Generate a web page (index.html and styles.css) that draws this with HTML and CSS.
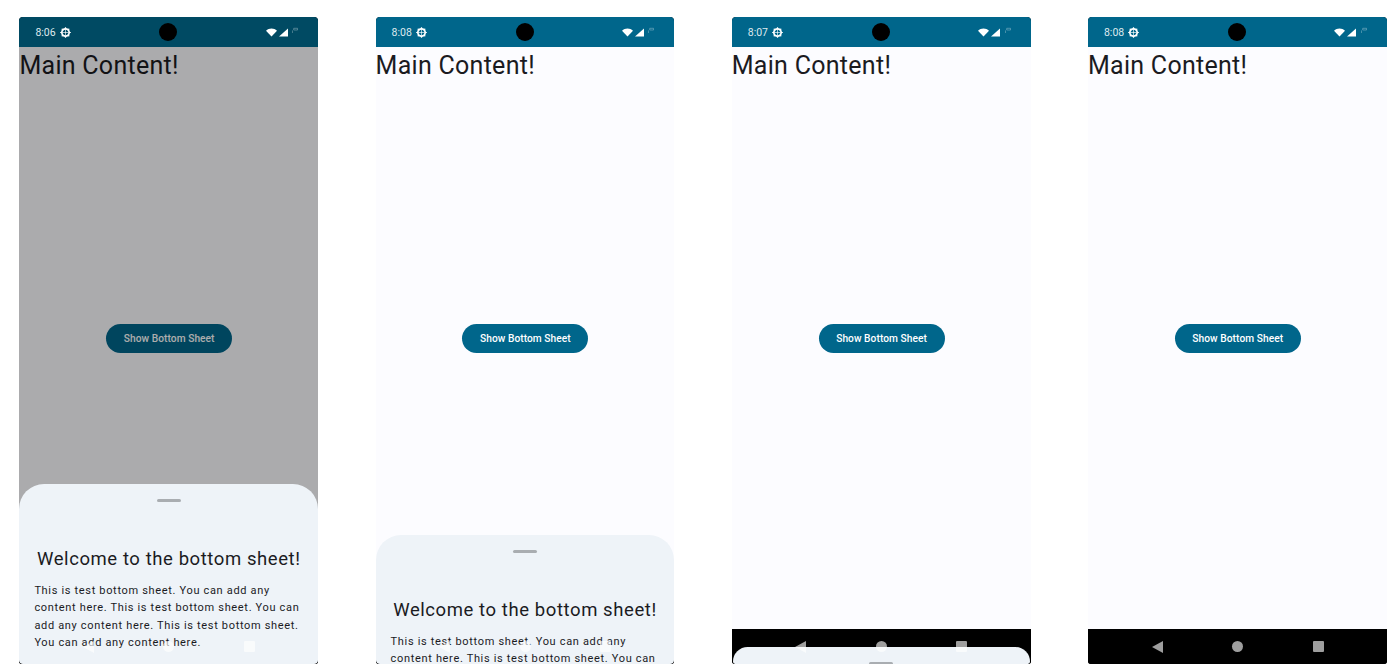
FILE: index.html
```html
<!DOCTYPE html>
<html lang="en">
<head>
  <meta charset="UTF-8">
  <meta name="viewport" content="width=device-width, initial-scale=1.0">
  <title>Bottom Sheet</title>
  <link rel="stylesheet" href="styles.css">
</head>
<body>
  <div class="gallery">

    <!-- sheet fully open, content dimmed -->
    <div class="phone">
      <div class="status-bar status-bar-dim">
        <div class="status-left">
          <span class="time">8:06</span>
          <svg class="gear" viewBox="0 0 12 12"><circle cx="6" cy="6" r="4" fill="none" stroke="currentColor" stroke-width="1.9"/><path d="M6 0.2V11.8M0.2 6H11.8M1.9 1.9L10.1 10.1M10.1 1.9L1.9 10.1" stroke="currentColor" stroke-width="1.3" stroke-dasharray="2.4 7"/><path d="M6 3V9M3 6H9" stroke="currentColor" stroke-width="0.7"/></svg>
        </div>
        <div class="camera"></div>
        <div class="status-right">
          <svg class="wifi" viewBox="0 0 11 8"><path d="M0 2.2C3 -0.6 8 -0.6 11 2.2L5.5 8Z" fill="currentColor"/></svg>
          <svg class="signal" viewBox="0 0 10 9"><path d="M10 0V9H0Z" fill="currentColor"/></svg>
          <svg class="battery" viewBox="0 0 7 7"><path d="M0.5 7V4M2 1.5H6.5V3.5H2Z" fill="none" stroke="currentColor" stroke-width="0.7"/></svg>
        </div>
      </div>
      <div class="content">
        <h1>Main Content!</h1>
        <div class="button-area"><button>Show Bottom Sheet</button></div>
      </div>
      <div class="nav-bar"></div>
      <div class="scrim"></div>
      <div class="sheet sheet-open">
        <div class="handle"></div>
        <h2>Welcome to the bottom sheet!</h2>
        <p>This is test bottom sheet. You can add any content here. This is test bottom sheet. You can add any content here. This is test bottom sheet. You can add any content here.</p>
      </div>
      <div class="nav-icons">
        <svg class="nav-back" viewBox="0 0 11 12"><path d="M11 0V12L0 6Z" fill="currentColor"/></svg>
        <span class="nav-home"></span>
        <span class="nav-recent"></span>
      </div>
    </div>

    <!-- sheet half way -->
    <div class="phone">
      <div class="status-bar">
        <div class="status-left">
          <span class="time">8:08</span>
          <svg class="gear" viewBox="0 0 12 12"><circle cx="6" cy="6" r="4" fill="none" stroke="currentColor" stroke-width="1.9"/><path d="M6 0.2V11.8M0.2 6H11.8M1.9 1.9L10.1 10.1M10.1 1.9L1.9 10.1" stroke="currentColor" stroke-width="1.3" stroke-dasharray="2.4 7"/><path d="M6 3V9M3 6H9" stroke="currentColor" stroke-width="0.7"/></svg>
        </div>
        <div class="camera"></div>
        <div class="status-right">
          <svg class="wifi" viewBox="0 0 11 8"><path d="M0 2.2C3 -0.6 8 -0.6 11 2.2L5.5 8Z" fill="currentColor"/></svg>
          <svg class="signal" viewBox="0 0 10 9"><path d="M10 0V9H0Z" fill="currentColor"/></svg>
          <svg class="battery" viewBox="0 0 7 7"><path d="M0.5 7V4M2 1.5H6.5V3.5H2Z" fill="none" stroke="currentColor" stroke-width="0.7"/></svg>
        </div>
      </div>
      <div class="content">
        <h1>Main Content!</h1>
        <div class="button-area"><button>Show Bottom Sheet</button></div>
      </div>
      <div class="nav-bar"></div>
      <div class="sheet sheet-half">
        <div class="handle"></div>
        <h2>Welcome to the bottom sheet!</h2>
        <p>This is test bottom sheet. You can add any content here. This is test bottom sheet. You can add any content here. This is test bottom sheet. You can add any content here.</p>
      </div>
      <div class="nav-icons">
        <svg class="nav-back" viewBox="0 0 11 12"><path d="M11 0V12L0 6Z" fill="currentColor"/></svg>
        <span class="nav-home"></span>
        <span class="nav-recent"></span>
      </div>
    </div>

    <!-- sheet peeking -->
    <div class="phone">
      <div class="status-bar">
        <div class="status-left">
          <span class="time">8:07</span>
          <svg class="gear" viewBox="0 0 12 12"><circle cx="6" cy="6" r="4" fill="none" stroke="currentColor" stroke-width="1.9"/><path d="M6 0.2V11.8M0.2 6H11.8M1.9 1.9L10.1 10.1M10.1 1.9L1.9 10.1" stroke="currentColor" stroke-width="1.3" stroke-dasharray="2.4 7"/><path d="M6 3V9M3 6H9" stroke="currentColor" stroke-width="0.7"/></svg>
        </div>
        <div class="camera"></div>
        <div class="status-right">
          <svg class="wifi" viewBox="0 0 11 8"><path d="M0 2.2C3 -0.6 8 -0.6 11 2.2L5.5 8Z" fill="currentColor"/></svg>
          <svg class="signal" viewBox="0 0 10 9"><path d="M10 0V9H0Z" fill="currentColor"/></svg>
          <svg class="battery" viewBox="0 0 7 7"><path d="M0.5 7V4M2 1.5H6.5V3.5H2Z" fill="none" stroke="currentColor" stroke-width="0.7"/></svg>
        </div>
      </div>
      <div class="content">
        <h1>Main Content!</h1>
        <div class="button-area"><button>Show Bottom Sheet</button></div>
      </div>
      <div class="nav-bar"></div>
      <div class="sheet sheet-peek">
        <div class="handle"></div>
      </div>
      <div class="nav-icons">
        <svg class="nav-back" viewBox="0 0 11 12"><path d="M11 0V12L0 6Z" fill="currentColor"/></svg>
        <span class="nav-home"></span>
        <span class="nav-recent"></span>
      </div>
    </div>

    <!-- sheet hidden -->
    <div class="phone">
      <div class="status-bar">
        <div class="status-left">
          <span class="time">8:08</span>
          <svg class="gear" viewBox="0 0 12 12"><circle cx="6" cy="6" r="4" fill="none" stroke="currentColor" stroke-width="1.9"/><path d="M6 0.2V11.8M0.2 6H11.8M1.9 1.9L10.1 10.1M10.1 1.9L1.9 10.1" stroke="currentColor" stroke-width="1.3" stroke-dasharray="2.4 7"/><path d="M6 3V9M3 6H9" stroke="currentColor" stroke-width="0.7"/></svg>
        </div>
        <div class="camera"></div>
        <div class="status-right">
          <svg class="wifi" viewBox="0 0 11 8"><path d="M0 2.2C3 -0.6 8 -0.6 11 2.2L5.5 8Z" fill="currentColor"/></svg>
          <svg class="signal" viewBox="0 0 10 9"><path d="M10 0V9H0Z" fill="currentColor"/></svg>
          <svg class="battery" viewBox="0 0 7 7"><path d="M0.5 7V4M2 1.5H6.5V3.5H2Z" fill="none" stroke="currentColor" stroke-width="0.7"/></svg>
        </div>
      </div>
      <div class="content">
        <h1>Main Content!</h1>
        <div class="button-area"><button>Show Bottom Sheet</button></div>
      </div>
      <div class="nav-bar"></div>
      <div class="nav-icons">
        <svg class="nav-back" viewBox="0 0 11 12"><path d="M11 0V12L0 6Z" fill="currentColor"/></svg>
        <span class="nav-home"></span>
        <span class="nav-recent"></span>
      </div>
    </div>

  </div>
</body>
</html>
```

FILE: styles.css
```css
* {
  box-sizing: border-box;
  font-family: Roboto, 'Liberation Sans', sans-serif;
}
html, body {
  height: 100%;
}
body {
  margin: 0;
  background-color: #fff;
  overflow: hidden;
}
.gallery {
  display: flex;
  gap: 57.4px;
  padding: 17px 0 2px 19.4px;
  height: 666px;
}
.phone {
  position: relative;
  display: flex;
  flex-direction: column;
  width: 298.8px;
  overflow: hidden;
  background: #000;
  border-radius: 4px 4px 3px 3px;
}
.status-bar {
  position: relative;
  display: flex;
  justify-content: space-between;
  align-items: center;
  height: 30px;
  flex-shrink: 0;
  padding: 0 20px 0 16px;
  background: #00668b;
  color: #fff;
}
.status-bar-dim {
  background: #004a63;
}
.status-left {
  display: flex;
  align-items: center;
  gap: 4px;
}
.time {
  font-size: 10.5px;
  color: #dfe9ee;
}
.gear {
  width: 11px;
  height: 11px;
}
.camera {
  position: absolute;
  left: 140px;
  top: 6px;
  width: 18px;
  height: 18px;
  border-radius: 50%;
  background: #000;
}
.status-right {
  display: flex;
  align-items: center;
  gap: 2px;
}
.wifi {
  width: 11px;
  height: 9px;
}
.signal {
  width: 9px;
  height: 9px;
}
.battery {
  width: 6px;
  height: 6px;
  margin: 0 0 4px 2.7px;
  opacity: 0.5;
}
.content {
  flex: 1;
  display: flex;
  flex-direction: column;
  position: relative;
  background: #fcfcff;
}
h1 {
  margin: 0;
  font-size: 25px;
  font-weight: 400;
  line-height: 38px;
  letter-spacing: 0.28px;
  color: #1b1b1f;
}
.button-area {
  flex: 1;
  display: flex;
  justify-content: center;
  align-items: center;
  padding: 0 0 38px 0.8px;
}
button {
  width: 126px;
  height: 29px;
  padding: 0;
  border: none;
  border-radius: 15px;
  background: #00668b;
  color: #fff;
  font-size: 10.2px;
  font-weight: 500;
  letter-spacing: 0.05px;
}
.nav-bar {
  height: 35px;
  flex-shrink: 0;
  background: #000;
}
.scrim {
  position: absolute;
  top: 30px;
  left: 0;
  right: 0;
  bottom: 0;
  background: rgba(0, 0, 0, 0.32);
}
.sheet {
  position: absolute;
  left: 0;
  right: 0;
  bottom: 0;
  padding: 0 15px;
  background: #eef3f8;
  border-radius: 25px 25px 4px 4px;
  color: #1b1b1f;
}
.sheet-open {
  height: 180px;
}
.sheet-half {
  top: 518px;
}
.sheet-peek {
  top: 630px;
  left: 1px;
  right: 1px;
}
.handle {
  width: 24px;
  height: 3px;
  margin: 15px auto 0;
  border-radius: 2px;
  background: #a9adb1;
}
.sheet h2 {
  margin: 45px -5px 0;
  font-size: 18.5px;
  font-weight: 400;
  line-height: 24px;
  letter-spacing: 0.58px;
  text-align: center;
}
.sheet p {
  margin: 11px 0 0;
  font-size: 11px;
  line-height: 17.3px;
  letter-spacing: 0.67px;
}
.nav-icons {
  position: absolute;
  left: 63.6px;
  bottom: 0;
  width: 172px;
  height: 35px;
  display: flex;
  justify-content: space-between;
  align-items: center;
  color: rgba(255, 255, 255, 0.62);
}
.nav-back {
  width: 11px;
  height: 12px;
}
.nav-home {
  width: 11px;
  height: 11px;
  border-radius: 50%;
  background: rgba(255, 255, 255, 0.62);
}
.nav-recent {
  width: 11px;
  height: 11px;
  border-radius: 1px;
  background: rgba(255, 255, 255, 0.62);
}
```
